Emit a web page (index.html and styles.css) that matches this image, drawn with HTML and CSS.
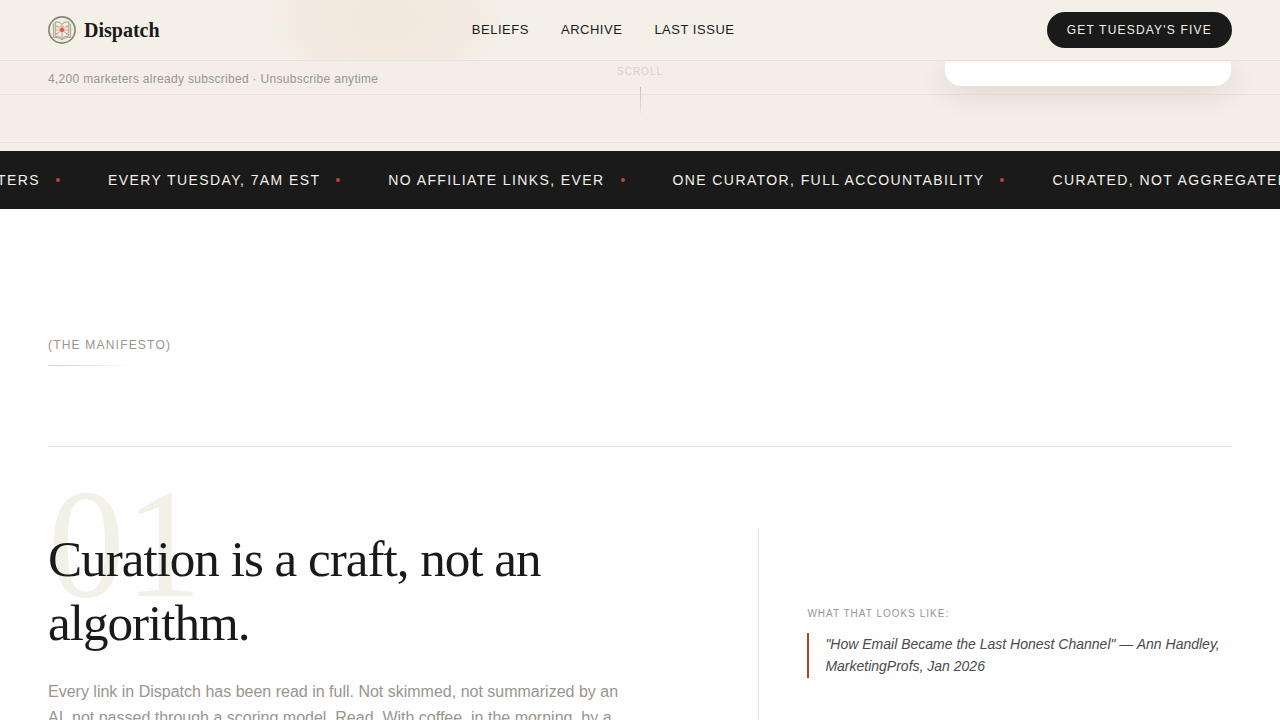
FILE: index.html
```
<!DOCTYPE html>
<html lang="en">

<head>
    <meta charset="UTF-8">
    <meta name="viewport" content="width=device-width, initial-scale=1.0">
    <title>Dispatch</title>
    <link rel="stylesheet" href="styles.css">
</head>

<body>
    <header class="nav">
        <a class="brand" href="#">
            <svg class="brand-logo" viewBox="0 0 28 28" fill="none">
                <circle cx="14" cy="14" r="13.1" fill="#f1ede2" stroke="#85877a" stroke-width="1.7"/>
                <path d="M14 8.4C12.6 6.4 10 5.6 7.2 6v14.4c2.8-.2 5.2.4 6.8 2.2 1.6-1.8 4-2.4 6.8-2.2V6c-2.8-.4-5.4.4-6.8 2.4z" stroke="#96967f" stroke-width=".9"/>
                <path d="M14 8.4v14M5.4 7.6v14c3.2-.4 6.2.2 8.6 2.2 2.4-2 5.4-2.6 8.6-2.2v-14" stroke="#96967f" stroke-width=".8"/>
                <path d="M14 14L9 10.3M14 14l5-3.7M14 14H7.6M14 14h6.4M14 14l-5 3.8M14 14l5 3.8M14 14l-1.6-4M14 14l1.6-4" stroke="#dc8a78" stroke-width=".8"/>
                <circle cx="14" cy="14" r="2.1" fill="#d4574a"/>
                <g fill="#dc8a78">
                    <circle cx="9" cy="10.3" r=".9"/>
                    <circle cx="19" cy="10.3" r=".9"/>
                    <circle cx="9" cy="17.8" r=".9"/>
                    <circle cx="19" cy="17.8" r=".9"/>
                </g>
            </svg>
            <span class="brand-name">Dispatch</span>
        </a>
        <nav class="nav-links">
            <a href="#beliefs">Beliefs</a>
            <a href="#archive">Archive</a>
            <a href="#issue">Last Issue</a>
        </nav>
        <a class="nav-cta" href="#">Get Tuesday's Five</a>
    </header>

    <section class="hero">
        <p class="hero-proof">4,200 marketers already subscribed · Unsubscribe anytime</p>
        <div class="hero-scroll">
            <span>Scroll</span>
            <i class="scroll-line"></i>
        </div>
        <div class="hero-card"></div>
    </section>

    <div class="marquee">
        <div class="marquee-item first">For marketers<i></i></div>
        <div class="marquee-item">Every Tuesday, 7am EST<i></i></div>
        <div class="marquee-item">No affiliate links, ever<i></i></div>
        <div class="marquee-item">One curator, full accountability<i></i></div>
        <div class="marquee-item">Curated, not aggregated<i></i></div>
    </div>

    <main class="manifesto" id="beliefs">
        <h2 class="label">(The Manifesto)</h2>
        <article class="belief">
            <div class="belief-main">
                <span class="belief-num">01</span>
                <h3 class="belief-title">Curation is a craft, not an algorithm.</h3>
                <p class="belief-text">Every link in Dispatch has been read in full. Not skimmed, not summarized by an AI, not passed through a scoring model. Read. With coffee, in the morning, by a</p>
            </div>
            <aside class="belief-side">
                <p class="side-label">What that looks like:</p>
                <blockquote class="side-quote">"How Email Became the Last Honest Channel" — Ann Handley, MarketingProfs, Jan 2026</blockquote>
            </aside>
        </article>
    </main>
</body>

</html>
```

FILE: styles.css
```
* {
    margin: 0;
    padding: 0;
    box-sizing: border-box;
}

body {
    height: 720px;
    overflow: hidden;
    background: #fefefe;
    color: #1a1a1a;
    font-family: "Liberation Sans", Arial, sans-serif;
}

a {
    color: inherit;
    text-decoration: none;
}

/* nav */
.nav {
    display: flex;
    justify-content: space-between;
    align-items: center;
    height: 61px;
    padding: 0 48px;
    border-bottom: 1px solid #e6e2da;
    background: radial-gradient(ellipse 125px 70px at 385px 20px, #f2e8de 0%, #f3e9e0 60%, rgba(244, 240, 232, 0) 100%), #f4f0e8;
}

.brand {
    display: flex;
    align-items: center;
    gap: 8px;
}

.brand-logo {
    width: 28px;
    height: 28px;
}

.brand-name {
    font: bold 20px "Liberation Serif", "Times New Roman", serif;
}

.nav-links {
    display: flex;
    gap: 32px;
    padding-bottom: 1px;
    font-size: 13px;
    line-height: 16px;
    letter-spacing: 0.52px;
    text-transform: uppercase;
}

.nav-cta {
    padding: 0 20px;
    border-radius: 18px;
    background: #1a1a1a;
    color: #f4f0e8;
    font-size: 12px;
    line-height: 36px;
    letter-spacing: 1.2px;
    text-transform: uppercase;
}

/* hero */
.hero {
    display: grid;
    grid-template-columns: 1fr auto 1fr;
    align-items: start;
    height: 90px;
    padding: 0 48px;
    overflow: hidden;
    background:
        linear-gradient(#ebe4de, #ebe4de) 0 33px / 100% 1px no-repeat,
        linear-gradient(#ebe3db, #ebe3db) 0 81px / 100% 1px no-repeat,
        linear-gradient(#f5eee8 82px, #f4efe6 82px);
}

.hero-proof {
    padding-top: 11px;
    color: #9a958e;
    font-size: 12px;
    letter-spacing: 0.3px;
}

.hero-scroll {
    display: flex;
    flex-direction: column;
    align-items: center;
    gap: 10px;
    padding-top: 5px;
    color: #d8d1cb;
    font-size: 10px;
    letter-spacing: 1px;
    text-transform: uppercase;
}

.scroll-line {
    width: 1px;
    height: 26px;
    margin-left: 1px;
    background: linear-gradient(#c4bdb8, #e8e1dc);
}

.hero-card {
    justify-self: end;
    width: 286px;
    height: 25px;
    margin-right: 1px;
    border-radius: 0 0 16px 16px;
    background: #fff;
    box-shadow: 0 8px 28px rgba(30, 30, 0, 0.1);
}

/* marquee */
.marquee {
    display: flex;
    height: 58px;
    overflow: hidden;
    background: #1a1a1a;
    color: #f4f0e8;
    font-size: 14px;
    line-height: 58px;
    letter-spacing: 1.4px;
    text-transform: uppercase;
    white-space: nowrap;
}

.marquee-item {
    display: flex;
    flex: none;
    align-items: center;
    padding-right: 48px;
}

.marquee-item i {
    flex: none;
    width: 4px;
    height: 4px;
    margin-left: 16px;
    border-radius: 50%;
    background: #c0432f;
}

.marquee-item.first {
    width: 108px;
    justify-content: flex-end;
}

/* manifesto */
.manifesto {
    padding: 128px 48px 0;
}

.label {
    color: #9a958e;
    font-size: 12px;
    font-weight: normal;
    line-height: 16px;
    letter-spacing: 1.2px;
    text-transform: uppercase;
}

.label::after {
    content: "";
    display: block;
    width: 80px;
    height: 1px;
    margin-top: 12px;
    background: linear-gradient(90deg, #cfccc8, #fefefe);
}

.belief {
    display: grid;
    grid-template-columns: 60% 40%;
    height: 274px;
    margin-top: 80px;
    padding-top: 80px;
    border-top: 1px solid #e6e4e1;
}

.belief-main {
    position: relative;
    padding-right: 128px;
}

/* oversized number behind the title */
.belief-num {
    position: absolute;
    top: -59px;
    left: 0;
    z-index: -1;
    color: #f2f1e8;
    font: 153.6px/1 "Liberation Serif", "Times New Roman", serif;
}

.belief-title {
    margin-bottom: 24px;
    font: 51.2px/64px "Liberation Serif", "Times New Roman", serif;
    letter-spacing: -1.024px;
}

.belief-text {
    color: #9a958e;
    font-size: 16px;
    line-height: 25.6px;
}

.belief-side {
    margin-top: 1px;
    padding: 80px 0 0 48px;
    border-left: 1px solid #e6e4e1;
}

.side-label {
    margin-bottom: 13px;
    color: #9a958e;
    font-size: 10px;
    line-height: 12px;
    letter-spacing: 1px;
    text-transform: uppercase;
}

.side-quote {
    padding-left: 16px;
    border-left: 2px solid #a8452f;
    color: #4a4a4a;
    font-size: 14px;
    font-style: italic;
    line-height: 22.4px;
}
```
